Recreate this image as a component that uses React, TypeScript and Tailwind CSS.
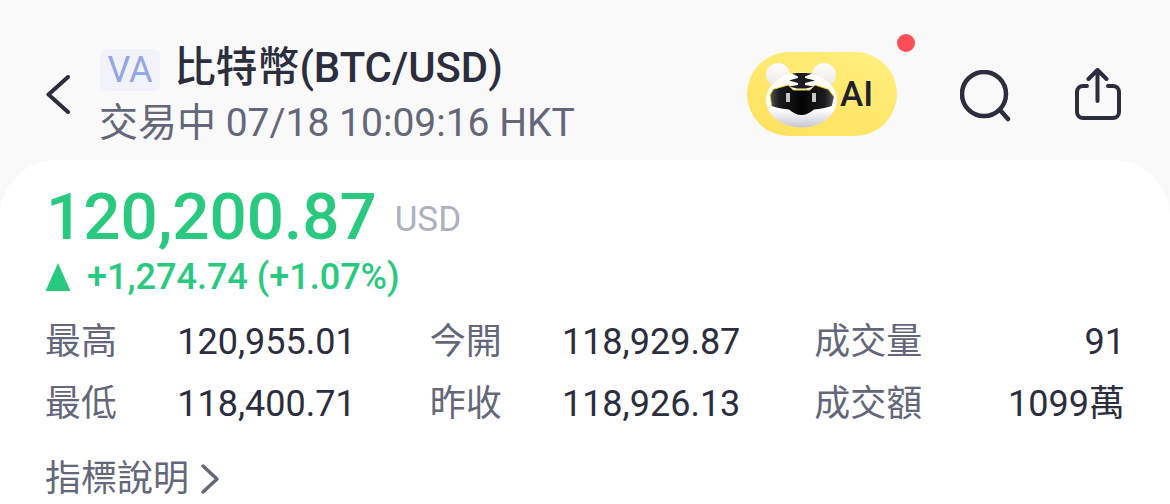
import * as React from "react";

const FONT = "font-['Roboto','Noto_Sans_CJK_TC',sans-serif]";

const stats = [
  [
    { label: "最高", value: "120,955.01" },
    { label: "今開", value: "118,929.87" },
    { label: "成交量", value: "91" },
  ],
  [
    { label: "最低", value: "118,400.71" },
    { label: "昨收", value: "118,926.13" },
    { label: "成交額", value: "1099萬" },
  ],
];

function TigerLogo() {
  return (
    <svg width="74" height="68" viewBox="0 0 74 68" className="shrink-0">
      <defs>
        <linearGradient id="face" x1="0" y1="0" x2="0" y2="1">
          <stop offset="0.68" stopColor="#ffffff" />
          <stop offset="1" stopColor="#c6c6d4" />
        </linearGradient>
        <linearGradient id="ear" x1="0" y1="0" x2="0" y2="1">
          <stop offset="0" stopColor="#ffffff" />
          <stop offset="1" stopColor="#ece8e0" />
        </linearGradient>
        <linearGradient id="visor" x1="0" y1="0" x2="1" y2="0">
          <stop offset="0" stopColor="#55555a" />
          <stop offset="0.14" stopColor="#1c1c1e" />
          <stop offset="0.5" stopColor="#050505" />
          <stop offset="0.86" stopColor="#1c1c1e" />
          <stop offset="1" stopColor="#55555a" />
        </linearGradient>
      </defs>
      <circle cx="14" cy="15" r="12" fill="url(#ear)" />
      <circle cx="60" cy="15" r="12" fill="url(#ear)" />
      <ellipse cx="37.500" cy="40" rx="35.500" ry="27.500" fill="url(#face)" />
      {/* forehead stripes */}
      <path d="M28 13.500L34 13H41L48 13.500L41 16.500V25L50 26.500L42 28.500H33L25 26.500L34 25V16.500Z" fill="#1c1c1c" />
      <path d="M25 20.500L34 18H41L51 20.500L41 23H34Z" fill="#1c1c1c" />
      {/* visor */}
      <path
        d="M6 35L9.300 29.300L24.300 25L29.300 30H46L51 25L64.300 29.300L70 36.700L67.700 46C62 48 56 49 50 49.500C46 53 42 55 37.500 55C33 55 29 53 25 49.500C19 49 13 48 7.700 46Z"
        fill="url(#visor)"
      />
      <path d="M6 35L9.300 29.300L24.300 25L29.300 30H46L51 25L64.300 29.300L70 36.700" fill="none" stroke="#f2cf14" strokeWidth="1" strokeLinejoin="round" />
      <path d="M6 35L7.700 46" fill="none" stroke="#f2cf14" strokeWidth="0.800" />
      <rect x="22" y="33" width="4" height="9" fill="#c4c4c4" />
      <rect x="48" y="33" width="4" height="9" fill="#c4c4c4" />
    </svg>
  );
}

export default function App() {
  return (
    <div className={`${FONT} flex h-[504px] w-[1170px] flex-col overflow-hidden bg-[#f9f9f9]`}>
      {/* top bar */}
      <header className="flex h-[160px] shrink-0 items-start">
        <div className="ml-[46px] mt-[75px] w-[54px] shrink-0">
          <svg width="24" height="39" viewBox="0 0 24 39" fill="none">
            <path d="M22 2L2.500 19.500L22 37" stroke="#2c2d3d" strokeWidth="4" strokeLinecap="round" strokeLinejoin="round" />
          </svg>
        </div>
        <div className="mt-[42px] w-[647px] shrink-0">
          <div className="flex h-[52px] items-start">
            <span className="mt-[7px] flex h-[42px] w-[60px] items-center justify-center rounded-[6px] bg-[#f2f3fa] text-[36px] leading-none text-[#96a5e3]">
              VA
            </span>
            <span className="ml-[14px] text-[41.800px] font-medium leading-[52px] text-[#2c2d3d]">比特幣(BTC/USD)</span>
          </div>
          <div className="ml-[-1px] mt-[4px] text-[39px] leading-[50px] text-[#646779]">交易中 07/18 10:09:16 HKT</div>
        </div>
        <div className="relative mt-[52px] flex h-[84px] w-[150px] shrink-0 items-center rounded-full bg-[linear-gradient(20deg,#ffe05c,#fff07f)]">
          <div className="ml-[17px]">
            <TigerLogo />
          </div>
          <span className="ml-[2px] text-[35px] font-medium leading-none text-[#1f2030]">AI</span>
          <span className="absolute left-[150px] top-[-18px] h-[18px] w-[18px] rounded-full bg-[#ff4d57]" />
        </div>
        <svg width="52" height="52" viewBox="0 0 52 52" fill="none" className="ml-[63px] mt-[70px] shrink-0">
          <circle cx="24" cy="24" r="22" stroke="#2c2d3d" strokeWidth="4.500" />
          <path d="M40 40L48 49" stroke="#2c2d3d" strokeWidth="4.500" strokeLinecap="round" />
        </svg>
        <svg width="46" height="52" viewBox="0 0 46 52" fill="none" className="ml-[63px] mt-[68px] shrink-0">
          <path d="M12 18H8a6 6 0 0 0-6 6v20a6 6 0 0 0 6 6h30a6 6 0 0 0 6-6V24a6 6 0 0 0-6-6h-5" stroke="#2c2d3d" strokeWidth="4" strokeLinecap="round" />
          <path d="M22.500 33V3M13.500 11l9-9l9 9" stroke="#2c2d3d" strokeWidth="4" strokeLinecap="round" strokeLinejoin="round" />
        </svg>
      </header>

      {/* quote card */}
      <main className="flex-1 rounded-t-[56px] bg-white px-[45px]">
        <div className="mt-[19px] flex items-center">
          <span className="ml-[1px] text-[65.500px] font-medium leading-[76px] text-[#29c97f]">120,200.87</span>
          <span className="ml-[18px] mt-[4px] text-[35px] leading-none text-[#aeb0c0]">USD</span>
        </div>
        <div className="flex h-[44px] items-center text-[36px] font-medium leading-none text-[#29c97f]">
          <svg width="26" height="30" viewBox="0 0 26 30" className="shrink-0">
            <path d="M13 1L25.500 29H0.500Z" fill="#29c97f" />
          </svg>
          <span className="ml-[16px]">+1,274.74 (+1.07%)</span>
        </div>
        <div className="mt-[18px] flex flex-col gap-[12px]">
          {stats.map((row, i) => (
            <div key={i} className="flex h-[50px] items-center text-[36px] leading-none">
              {row.map((cell, j) => (
                <div key={cell.label} className={j === 2 ? "flex w-[311px] justify-between" : "mr-[74px] flex w-[311px] justify-between"}>
                  <span className="text-[#646779]">{cell.label}</span>
                  <span className="text-[#2c2d3d]">{cell.value}</span>
                </div>
              ))}
            </div>
          ))}
        </div>
        <div className="mt-[25px] flex h-[50px] items-center text-[36px] leading-none text-[#646779]">
          指標說明
          <svg width="20" height="32" viewBox="0 0 20 32" fill="none" className="ml-[11px] shrink-0">
            <path d="M3 3L17 16L3 29" stroke="#646779" strokeWidth="3.500" strokeLinecap="round" strokeLinejoin="round" />
          </svg>
        </div>
      </main>
    </div>
  );
}
